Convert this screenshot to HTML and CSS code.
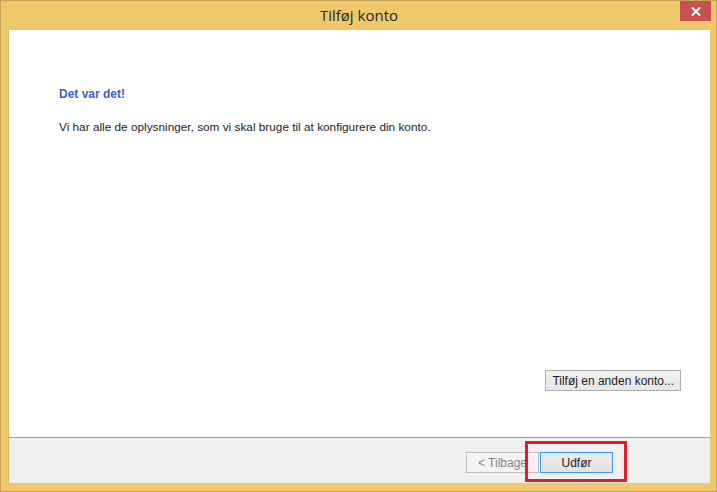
FILE: index.html
```html
<!DOCTYPE html>
<html lang="da">
<head>
  <meta charset="UTF-8">
  <title>Tilføj konto</title>
  <link rel="stylesheet" href="styles.css">
</head>
<body>

  <div class="window">
    <div class="titlebar">
      <span class="title">Tilføj konto</span>
      <button class="close-btn" aria-label="Luk">
        <svg width="10" height="9" viewBox="0 0 10 9">
          <path d="M1 0.5 L9 8.5 M9 0.5 L1 8.5" stroke="#fff" stroke-width="2"/>
        </svg>
      </button>
    </div>

    <div class="client">
      <div class="content">
        <h1 class="heading">Det var det!</h1>
        <p class="message">Vi har alle de oplysninger, som vi skal bruge til at konfigurere din konto.</p>
        <div class="extra">
          <button class="btn">Tilføj en anden konto...</button>
        </div>
      </div>
      <div class="footer">
        <button class="btn btn-disabled">&lt; Tilbage</button>
        <button class="btn btn-default">Udfør</button>
        <span class="highlight"></span>
      </div>
    </div>
  </div>

</body>
</html>
```

FILE: styles.css
```css
body {
  margin: 0;
  padding: 0;
  font-family: "Liberation Sans", Arial, sans-serif;
  font-size: 12px;
  color: #1e1e1e;
}
.window {
  box-sizing: border-box;
  width: 717px;
  height: 492px;
  display: flex;
  flex-direction: column;
  background-color: #f0c86c;
  border: 1px solid #c6a55a;
  padding: 0 6px 8px 7px;
}
.titlebar {
  position: relative;
  height: 29px;
  flex: none;
  display: flex;
  justify-content: center;
  align-items: center;
}
.title {
  font-family: "Open Sans", "Noto Sans", sans-serif;
  font-size: 15px;
  color: #1f2a2a;
  margin-top: -1px;
}
.close-btn {
  position: absolute;
  top: 0;
  right: -1px;
  width: 31px;
  height: 20px;
  border: none;
  padding: 0;
  background-color: #c75050;
  display: flex;
  justify-content: center;
  align-items: center;
}
.client {
  flex: 1;
  display: flex;
  flex-direction: column;
  border: 1px solid #dbb865;
  border-width: 0 0 0 1px;
  background-color: #fff;
}
.content {
  flex: 1;
  display: flex;
  flex-direction: column;
  padding: 57px 0 0 50px;
}
.heading {
  margin: 0;
  font-size: 12px;
  font-weight: bold;
  color: #3a5fcd;
}
.message {
  margin: 19px 0 0 0;
  font-size: 11.8px;
}
.extra {
  margin-top: auto;
  display: flex;
  justify-content: flex-end;
  padding: 0 29px 46px 0;
}
.btn {
  box-sizing: border-box;
  font-family: inherit;
  font-size: 12px;
  color: #1e1e1e;
  height: 21px;
  padding: 0 6px;
  border: 1px solid #adadad;
  background: linear-gradient(#f2f2f2, #e6e6e6);
}
.footer {
  position: relative;
  height: 46px;
  flex: none;
  box-sizing: border-box;
  border-top: 1px solid #a0a0a0;
  background-color: #f0f0f0;
  display: flex;
  align-items: flex-start;
  padding: 14px 0 0 457px;
  gap: 1px;
}
.footer .btn {
  width: 73px;
}
.btn-disabled {
  color: #838383;
  border-color: #bfbfbf;
  background: #f4f4f4;
}
.btn-default {
  border-color: #3399ff;
  background: linear-gradient(#ececec, #e2e2e2);
}
.highlight {
  position: absolute;
  left: 516px;
  top: 3px;
  width: 96px;
  height: 35px;
  border: 3px solid #e11d27;
}
```
